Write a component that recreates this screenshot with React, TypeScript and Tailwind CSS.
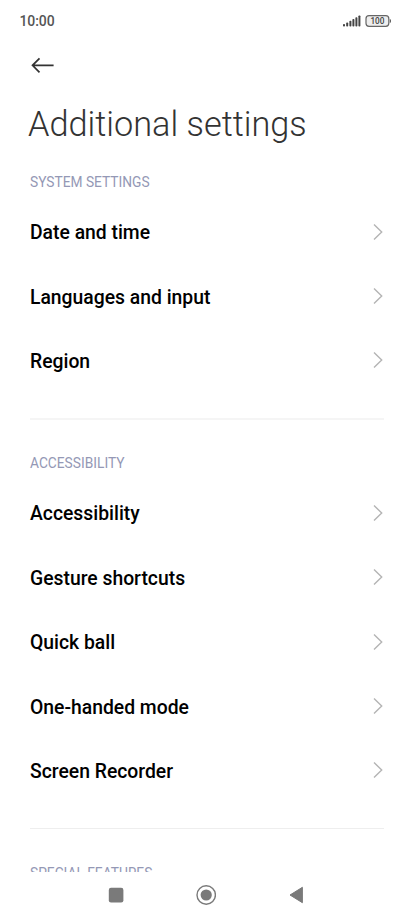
const F = "font-['Roboto',sans-serif]";

function Row({ label }: { label: string }) {
  return (
    <button className="flex h-[64.4px] w-full items-center justify-between text-left">
      <span className="pt-[2px] text-[19.33px] leading-6 font-medium text-black">{label}</span>
      <svg className="mb-px" width="12" height="18" viewBox="0 0 12 18" fill="none" stroke="#b4b4b4" strokeWidth="1.4">
        <path d="M2 1.5 9.7 9 2 16.5" />
      </svg>
    </button>
  );
}

function Section({ title, items }: { title: string; items: string[] }) {
  return (
    <section>
      <h2 className="h-4 text-[13.75px] leading-4 text-[#9498b5]">{title}</h2>
      <div className="pt-[10px]">
        {items.map((i) => (
          <Row key={i} label={i} />
        ))}
      </div>
    </section>
  );
}

export default function App() {
  return (
    <div className={`flex h-[920px] w-[413px] flex-col overflow-hidden bg-white ${F}`}>
      <header className="flex h-[42px] shrink-0 items-center justify-between pr-[21px] pl-[19.5px]">
        <span className="text-[14px] font-medium tracking-[-0.1px] text-[#555]">10:00</span>
        <svg width="50" height="14" viewBox="342 13.5 50 14">
          <g fill="#444">
            <rect x="343" y="23.6" width="2" height="2.4" rx="0.8" />
            <rect x="346.2" y="22" width="2" height="4" rx="0.8" />
            <rect x="349.4" y="20.2" width="2" height="5.8" rx="0.8" />
            <rect x="352.4" y="18.5" width="2" height="7.5" rx="0.8" />
            <rect x="355.4" y="16.8" width="2" height="9.2" rx="0.8" />
            <rect x="358.4" y="15" width="2" height="11" rx="0.8" />
          </g>
          <rect x="366" y="15.2" width="22.8" height="10.6" rx="3" fill="#eee" stroke="#666" strokeWidth="1.2" />
          <path d="M389.8 18.6a1.2 1.9 0 0 1 0 3.8z" fill="#555" />
          <text x="377.4" y="23.6" textAnchor="middle" fontSize="8.4" fontWeight="500" textLength="14" lengthAdjust="spacingAndGlyphs" fill="#444">100</text>
        </svg>
      </header>
      <div className="h-[62px] shrink-0 pt-3 pl-[30px]">
        <svg width="26" height="22" viewBox="0 0 26 22" fill="none" stroke="#333" strokeWidth="1.7">
          <path d="M23.6 11.3H2.4M9.5 4.3l-7 7 7 7" />
        </svg>
      </div>
      <h1 className="h-[70px] shrink-0 pl-[28px] text-[34.3px] leading-[40px] font-light text-[#333]">Additional settings</h1>
      <main className="min-h-0 grow overflow-hidden pr-[29px] pl-[30px]">
        <Section title="SYSTEM SETTINGS" items={["Date and time", "Languages and input", "Region"]} />
        <hr className="mt-[25px] mb-[35px] border-t-2 border-[#f5f5f5]" />
        <Section title="ACCESSIBILITY" items={["Accessibility", "Gesture shortcuts", "Quick ball", "One-handed mode", "Screen Recorder"]} />
        <hr className="mt-[25px] mb-[35.5px] border-[#eee]" />
        <Section title="SPECIAL FEATURES" items={[]} />
      </main>
      <nav className="flex h-12 shrink-0 items-center justify-center gap-[70px] pr-px pb-[3px]">
        <svg width="20" height="20" viewBox="0 0 20 20">
          <rect x="2.8" y="2.8" width="14.6" height="14.6" rx="2.2" fill="#7a7a7a" />
        </svg>
        <svg width="20" height="20" viewBox="0 0 20 20">
          <circle cx="10.2" cy="10" r="9.2" fill="none" stroke="#7a7a7a" strokeWidth="1.4" />
          <circle cx="10.2" cy="10" r="5.6" fill="#7a7a7a" />
        </svg>
        <svg width="20" height="20" viewBox="0 0 20 20">
          <path d="M4 10 16.4 2.3v15.4z" fill="#7a7a7a" stroke="#7a7a7a" strokeWidth="1" strokeLinejoin="round" />
        </svg>
      </nav>
    </div>
  );
}
